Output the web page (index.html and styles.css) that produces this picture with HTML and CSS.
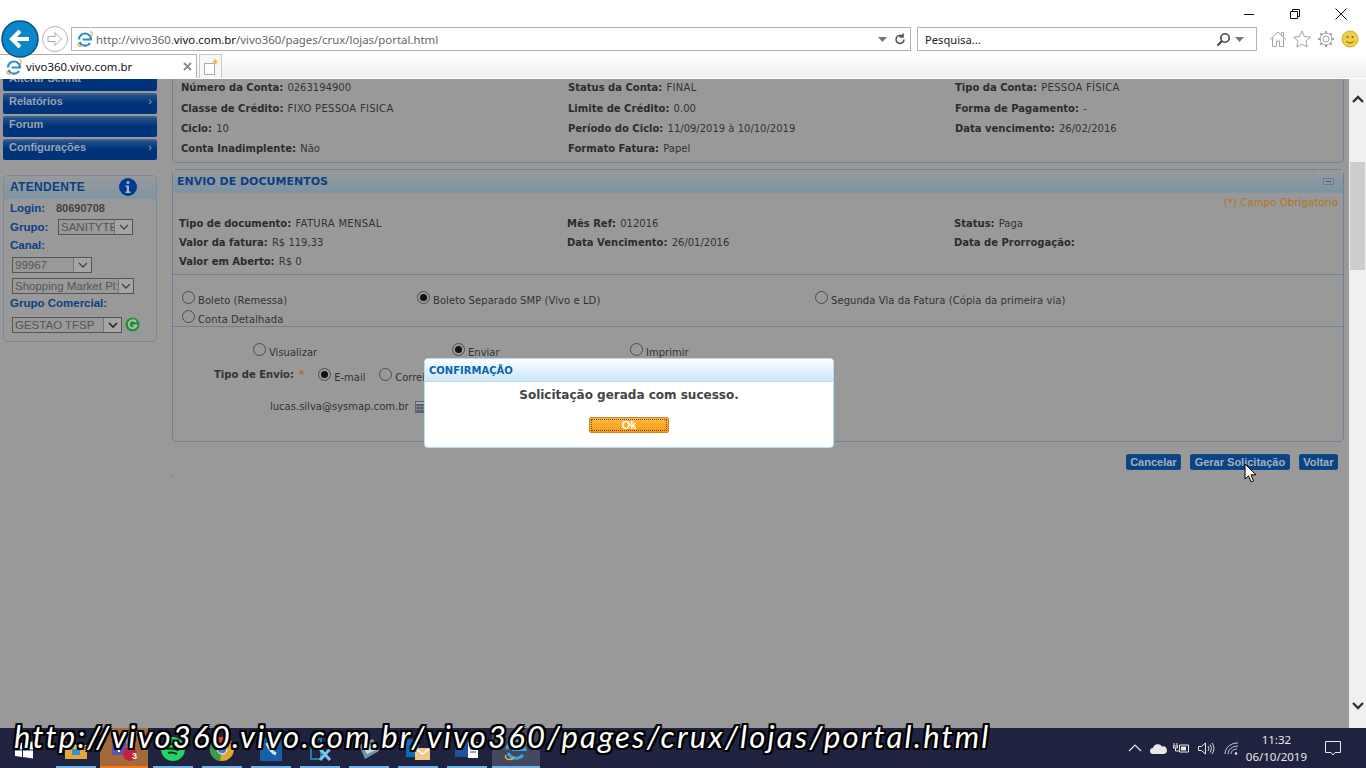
FILE: index.html
```html
<!DOCTYPE html>
<html lang="pt-BR">
<head>
<meta charset="utf-8">
<title>vivo360.vivo.com.br</title>
<link rel="stylesheet" href="styles.css">
</head>
<body>
<div class="screen">
  <header class="chrome">
    <div class="winbar">
      <svg class="winctl" width="12" height="12" viewBox="0 0 12 12"><path d="M1 6.500h10" stroke="#111" fill="none"/></svg>
      <svg class="winctl" width="12" height="12" viewBox="0 0 12 12"><path d="M1.500 3.500h7v7h-7zM3.500 3.500v-2h7v7h-2" stroke="#111" fill="none"/></svg>
      <svg class="winctl" width="12" height="12" viewBox="0 0 12 12"><path d="M.5.500l11 11M11.500.500l-11 11" stroke="#111" fill="none"/></svg>
    </div>
    <div class="navbar">
      <svg class="backbtn" width="40" height="40" viewBox="0 0 40 40"><circle cx="20" cy="20" r="18" fill="#0b86c9" stroke="#0d4f86" stroke-width="1.500"/><path d="M29 20H13M20 12l-8 8 8 8" stroke="#fff" stroke-width="4" fill="none"/></svg>
      <svg class="fwdbtn" width="28" height="28" viewBox="0 0 28 28"><circle cx="14" cy="14" r="12.500" fill="#fff" stroke="#b5b5b5"/><path d="M7 11.500h7v-4l6.500 6.500-6.500 6.500v-4H7z" fill="#fff" stroke="#aaa"/></svg>
      <div class="addr">
        <svg width="18" height="18" viewBox="0 0 18 18"><path d="M3 9.500a6 6 0 0 1 12 0H6.500M3.500 12a6 6 0 0 0 10.500 1" fill="none" stroke="#2a8fd0" stroke-width="2.200"/><path d="M14 2c2.500-1 3 2 1 4M2 13c-1 3 2 4 5 2" fill="none" stroke="#e8b33a" stroke-width="1.200"/></svg>
        <span class="url">http://vivo360.<b>vivo.com.br</b>/vivo360/pages/crux/lojas/portal.html</span>
        <span class="addr-end">
          <svg width="9" height="5" viewBox="0 0 9 5"><path d="M0 0h9L4.500 5z" fill="#777"/></svg>
          <svg width="12" height="13" viewBox="0 0 12 13"><path d="M10 6.500a4 4 0 1 1-1.500-3.200M9 .500v3.500H5.500" fill="none" stroke="#555" stroke-width="1.600"/></svg>
        </span>
      </div>
      <div class="search">
        <span class="search-text">Pesquisa...</span>
        <svg width="15" height="15" viewBox="0 0 15 15"><circle cx="9" cy="6" r="4.200" fill="none" stroke="#444" stroke-width="1.600"/><path d="M6 9l-4.500 4.500" stroke="#444" stroke-width="2.200"/></svg>
        <svg width="9" height="5" viewBox="0 0 9 5"><path d="M0 0h9L4.500 5z" fill="#777"/></svg>
      </div>
      <div class="tools">
        <svg width="18" height="18" viewBox="0 0 18 18"><path d="M1 9.500L9 2l8 7.500M3.500 8v8.500h4V11h3v5.500h4V8M12.500 5V2.500h2V7" fill="none" stroke="#a3a3a3"/></svg>
        <svg width="18" height="18" viewBox="0 0 18 18"><path d="M9 1l2.400 5.500 6 .6-4.500 4 1.300 5.900L9 14l-5.200 3 1.300-5.900-4.500-4 6-.6z" fill="none" stroke="#a3a3a3"/></svg>
        <svg width="18" height="18" viewBox="0 0 18 18"><circle cx="9" cy="9" r="3" fill="none" stroke="#a3a3a3"/><circle cx="9" cy="9" r="6" fill="none" stroke="#a3a3a3"/><path d="M9 1v2.500M9 14.500V17M1 9h2.500M14.500 9H17M3.300 3.300l1.800 1.800M12.900 12.900l1.800 1.800M3.300 14.700l1.800-1.800M12.900 5.100l1.800-1.800" stroke="#a3a3a3" stroke-width="2"/></svg>
        <svg width="18" height="18" viewBox="0 0 18 18"><circle cx="9" cy="9" r="8" fill="#f1cf45" stroke="#d5a92c"/><circle cx="6.500" cy="7" r="1" fill="#7a6420"/><circle cx="11.500" cy="7" r="1" fill="#7a6420"/><path d="M5 11c2 2.500 6 2.500 8 0" fill="none" stroke="#7a6420"/></svg>
      </div>
    </div>
    <div class="tabbar">
      <div class="tab">
        <svg width="18" height="18" viewBox="0 0 18 18"><path d="M3 9.500a6 6 0 0 1 12 0H6.500M3.500 12a6 6 0 0 0 10.500 1" fill="none" stroke="#2a8fd0" stroke-width="2.200"/><path d="M14 2c2.500-1 3 2 1 4M2 13c-1 3 2 4 5 2" fill="none" stroke="#e8b33a" stroke-width="1.200"/></svg>
        <span class="tab-title">vivo360.vivo.com.br</span>
        <svg width="9" height="9" viewBox="0 0 9 9"><path d="M1 1l7 7M8 1L1 8" stroke="#8a8a8a" stroke-width="1.800"/></svg>
      </div>
      <div class="newtab">
        <svg width="16" height="18" viewBox="0 0 16 18"><path d="M1.500 5.500h10v11h-10z" fill="#fff" stroke="#aaa"/><path d="M12 0l.8 2.500L15.500 3l-2.200 1.300.5 2.500-1.800-1.600L10 6.500l.7-2.500L9 3l2.400-.5z" fill="#f2b632"/></svg>
      </div>
    </div>
  </header>

  <div class="viewport">
    <div class="page">
      <aside class="sidebar">
        <nav class="menu">
          <div class="menu-item">Alterar Senha</div>
          <div class="menu-item">Relatórios<span class="caret">›</span></div>
          <div class="menu-item">Forum</div>
          <div class="menu-item">Configurações<span class="caret">›</span></div>
        </nav>
        <section class="agent">
          <div class="agent-head">ATENDENTE
            <svg class="info" width="18" height="18" viewBox="0 0 18 18"><circle cx="9" cy="9" r="9" fill="#003b8f"/><circle cx="9" cy="4.500" r="1.500" fill="#a7b3c4"/><path d="M6.500 7.500h3.500v6h1.500v1.500h-5v-1.500h1.200v-4.500H6.500z" fill="#a7b3c4"/></svg>
          </div>
          <div class="agent-body">
            <div class="agent-row"><span class="agent-label login-label">Login:</span><span class="agent-val">80690708</span></div>
            <div class="agent-row"><span class="agent-label grupo-label">Grupo:</span><span class="sel sel-grupo"><span class="sel-text">SANITYTE</span><span class="sel-arrow"><svg width="10" height="6" viewBox="0 0 10 6"><path d="M1 1l4 4 4-4" fill="none" stroke="#444" stroke-width="1.300"/></svg></span></span></div>
            <div class="agent-row"><span class="agent-label">Canal:</span></div>
            <div class="agent-row indent"><span class="sel sel-canal"><span class="sel-text">99967</span><span class="sel-arrow"><svg width="10" height="6" viewBox="0 0 10 6"><path d="M1 1l4 4 4-4" fill="none" stroke="#444" stroke-width="1.300"/></svg></span></span></div>
            <div class="agent-row indent"><span class="sel sel-shop"><span class="sel-text">Shopping Market Pl:</span><span class="sel-arrow"><svg width="10" height="6" viewBox="0 0 10 6"><path d="M1 1l4 4 4-4" fill="none" stroke="#444" stroke-width="1.300"/></svg></span></span></div>
            <div class="agent-row"><span class="agent-label">Grupo Comercial:</span></div>
            <div class="agent-row indent"><span class="sel sel-gestao"><span class="sel-text">GESTAO TFSP</span><span class="sel-arrow"><svg width="10" height="6" viewBox="0 0 10 6"><path d="M1 1l4 4 4-4" fill="none" stroke="#222" stroke-width="1.600"/></svg></span></span>
              <svg class="refresh" width="15" height="15" viewBox="0 0 15 15"><circle cx="7.500" cy="7.500" r="7" fill="#2b8a3e"/><path d="M11 5a4 4 0 1 0 .5 3.500H8" fill="none" stroke="#9fc9a8" stroke-width="1.800"/></svg>
            </div>
          </div>
        </section>
      </aside>

      <main class="content">
        <section class="panel panel-top">
          <div class="info-grid top-grid">
            <div><b>Número da Conta:</b> 0263194900</div><div><b>Status da Conta:</b> <span class="cap">FINAL</span></div><div><b>Tipo da Conta:</b> <span class="cap">PESSOA FÍSICA</span></div>
            <div><b>Classe de Crédito:</b> <span class="cap">FIXO PESSOA FISICA</span></div><div><b>Limite de Crédito:</b> 0.00</div><div><b>Forma de Pagamento:</b> -</div>
            <div><b>Ciclo:</b> 10</div><div><b>Período do Ciclo:</b> 11/09/2019 à 10/10/2019</div><div><b>Data vencimento:</b> 26/02/2016</div>
            <div><b>Conta Inadimplente:</b> Não</div><div><b>Formato Fatura:</b> Papel</div><div></div>
          </div>
        </section>

        <section class="panel panel-docs">
          <div class="panel-head"><span class="panel-title">ENVIO DE DOCUMENTOS</span><span class="collapse"><span class="collapse-box"></span></span></div>
          <div class="required">(*) Campo Obrigatório</div>
          <div class="info-grid doc-grid">
            <div><b>Tipo de documento:</b> <span class="cap">FATURA MENSAL</span></div><div><b>Mês Ref:</b> 012016</div><div><b>Status:</b> Paga</div>
            <div><b>Valor da fatura:</b> R$ 119,33</div><div><b>Data Vencimento:</b> 26/01/2016</div><div><b>Data de Prorrogação:</b></div>
            <div><b>Valor em Aberto:</b> R$ 0</div><div></div><div></div>
          </div>
          <div class="options">
            <div class="opt-row">
              <label class="opt opt-a"><span class="radio"></span>Boleto (Remessa)</label>
              <label class="opt opt-b"><span class="radio on"></span>Boleto Separado SMP (Vivo e LD)</label>
              <label class="opt"><span class="radio"></span>Segunda Via da Fatura (Cópia da primeira via)</label>
            </div>
            <div class="opt-row"><label class="opt"><span class="radio"></span>Conta Detalhada</label></div>
          </div>
          <div class="actions">
            <div class="opt-row action-row">
              <label class="opt opt-v"><span class="radio"></span>Visualizar</label>
              <label class="opt opt-e"><span class="radio on"></span>Enviar</label>
              <label class="opt"><span class="radio"></span>Imprimir</label>
            </div>
            <div class="send-row">
              <b class="send-label">Tipo de Envio:</b><span class="star">*</span>
              <label class="opt opt-m"><span class="radio on"></span>E-mail</label>
              <label class="opt"><span class="radio"></span>Correio</label>
            </div>
            <div class="mail-row">lucas.silva@sysmap.com.br
              <svg width="10" height="12" viewBox="0 0 10 12"><path d="M0 0h10v12H0z" fill="#5b6470"/><path d="M1 1h8v2H1z" fill="#9aa"/><path d="M1.500 5h1v1h-1zM4.500 5h1v1h-1zM7.500 5h1v1h-1zM1.500 8h1v1h-1zM4.500 8h1v1h-1zM7.500 8h1v1h-1z" fill="#ccc"/></svg>
            </div>
          </div>
        </section>

        <div class="buttons">
          <button class="btn">Cancelar</button>
          <button class="btn">Gerar Solicitação</button>
          <button class="btn">Voltar</button>
        </div>
        <div class="dot">.</div>
      </main>
    </div>
    <div class="scrollbar">
      <svg width="12" height="8" viewBox="0 0 12 8"><path d="M1 7l5-5 5 5" fill="none" stroke="#333" stroke-width="2.400"/></svg>
      <div class="thumb"></div>
      <svg class="scroll-down" width="12" height="8" viewBox="0 0 12 8"><path d="M1 1l5 5 5-5" fill="none" stroke="#333" stroke-width="2.400"/></svg>
    </div>
  </div>

  <footer class="taskbar">
    <svg class="tb-win" width="18" height="18" viewBox="0 0 18 18"><path d="M0 3l7-1v6.500H0zM8 2l10-1.500v8H8zM0 9.500h7V16l-7-1zM8 9.500h10v8L8 16z" fill="#fff"/></svg>
    <div class="tb-app"><svg width="26" height="24" viewBox="0 0 26 24"><path d="M2 5h9l2 3h11v14H2z" fill="#f1c24b"/><path d="M2 12h22v10H2z" fill="#e2a93a"/><path d="M9 12h8v6H9z" fill="#3a8fd6"/></svg></div>
    <div class="tb-app tb-teams"><svg width="30" height="28" viewBox="0 0 30 28"><path d="M3 6h14v14H3z" fill="#5558af"/><path d="M6 9h8v2h-3v6H9v-6H6z" fill="#fff"/><circle cx="20" cy="6" r="3" fill="#7b83eb"/><circle cx="21" cy="19" r="7" fill="#c4213f"/></svg><span class="badge">3</span></div>
    <div class="tb-app"><svg width="26" height="26" viewBox="0 0 26 26"><circle cx="13" cy="13" r="12" fill="#1ed760"/><path d="M6 9c5-1.500 10-1 14 1.500M7 13c4-1 8-.5 11.500 1.500M8 17c3-.8 6-.4 9 1" fill="none" stroke="#17301f" stroke-width="2"/></svg></div>
    <div class="tb-app"><svg width="26" height="26" viewBox="0 0 26 26"><circle cx="13" cy="13" r="12" fill="#e0a92c"/><path d="M13 13L2.500 7A12 12 0 0 1 24 8H13z" fill="#d6453a"/><path d="M13 13L2.500 7A12 12 0 0 0 11 25z" fill="#3c9a4a"/><circle cx="13" cy="13" r="5" fill="#3d7fd8" stroke="#fff"/></svg></div>
    <div class="tb-app"><svg width="24" height="24" viewBox="0 0 24 24"><path d="M1 1h22v24H1z" fill="#1560a8"/><path d="M8 6c2 6 4 9 9 11" fill="none" stroke="#cfe4f5" stroke-width="3"/></svg></div>
    <div class="tb-app"><svg width="26" height="26" viewBox="0 0 26 26"><path d="M4 3h10v20H4z" fill="none" stroke="#1e7ea8" stroke-width="2"/><path d="M13 13l10 11M23 13L13 24" stroke="#7cc7e8" stroke-width="3"/></svg></div>
    <div class="tb-app"><svg width="24" height="24" viewBox="0 0 24 24"><path d="M2 8l14-6 6 12-14 8z" fill="#6f96a5"/><path d="M6 10l10-4 3 7-9 4z" fill="#c6dbe4"/></svg></div>
    <div class="tb-app"><svg width="26" height="26" viewBox="0 0 26 26"><path d="M1 3h13v18H1z" fill="#0f6cbd"/><path d="M10 12h15v12H10z" fill="#f2c58a"/><path d="M10 12l7.500 6 7.500-6" fill="none" stroke="#fff" stroke-width="1.500"/></svg></div>
    <div class="tb-app"><svg width="26" height="26" viewBox="0 0 26 26"><path d="M1 3h14v18H1z" fill="#1f4f9d"/><path d="M14 6h10v16H14z" fill="#fff"/><path d="M16 10h6M16 13h6M16 16h6" stroke="#1f4f9d"/></svg></div>
    <div class="tb-app tb-ie"><svg width="26" height="26" viewBox="0 0 26 26"><path d="M4 13.500a9 9 0 0 1 18 0H9M5 17a9 9 0 0 0 15 2" fill="none" stroke="#2fa6df" stroke-width="3"/><path d="M20 3c4-1.500 5 3 2 6M3 19c-2 4 3 6 8 3" fill="none" stroke="#e8b33a" stroke-width="1.500"/></svg></div>
    <div class="tray">
      <svg width="14" height="8" viewBox="0 0 14 8"><path d="M1 7l6-6 6 6" fill="none" stroke="#e8e8e8" stroke-width="1.200"/></svg>
      <svg class="t-cloud" width="17" height="11" viewBox="0 0 17 11"><path d="M3 11a3 3 0 0 1 0-6 5 5 0 0 1 9-1.500A3.800 3.800 0 0 1 14 11z" fill="#e8e8e8"/></svg>
      <svg class="t-batt" width="16" height="12" viewBox="0 0 16 12"><path d="M6.500 3h9v7h-9zM1 1v3M4 1v3M.5 4h4v2h-4zM2.500 6v3h4" fill="none" stroke="#e8e8e8"/><path d="M8 4.500h5v4H8z" fill="#e8e8e8"/></svg>
      <svg class="t-vol" width="17" height="13" viewBox="0 0 17 13"><path d="M.5 4.500h3L7.500 1v11l-4-3.500h-3zM10 4c1 1.500 1 3.500 0 5M12 2.500c1.800 2.500 1.800 5.500 0 8M14 1c2.500 3.500 2.500 7.500 0 11" fill="none" stroke="#e8e8e8"/></svg>
      <svg class="t-wifi" width="15" height="13" viewBox="0 0 15 13"><path d="M1 12c0-6 5-11 13-11M4 12c0-4 4-8 10-8M7 12c0-2.500 2-5 6-5" fill="none" stroke="#cfcfcf"/><circle cx="12" cy="11.500" r="1.300" fill="#e8e8e8"/></svg>
      <div class="clock"><span>11:32</span><span>06/10/2019</span></div>
      <svg class="t-note" width="16" height="15" viewBox="0 0 16 15"><path d="M.5.500h15v11H10L8 14l-2-2.500H.5z" fill="none" stroke="#e8e8e8"/></svg>
    </div>
  </footer>

  <div class="modal">
    <div class="modal-head">CONFIRMAÇÃO</div>
    <div class="modal-msg">Solicitação gerada com sucesso.</div>
    <button class="modal-ok"><span class="modal-ok-in">Ok</span></button>
  </div>

  <svg class="cursor" width="13" height="20" viewBox="0 0 13 20"><path d="M1 1v15l3.500-3.200 2.500 6 2.500-1-2.500-6H12z" fill="#fff" stroke="#000"/></svg>

  <div class="caption">http://vivo360.vivo.com.br/vivo360/pages/crux/lojas/portal.html</div>
</div>
</body>
</html>
```
FILE: styles.css
```css
* { box-sizing: border-box; }
html, body { margin: 0; padding: 0; height: 100%; overflow: hidden; }
body { font-family: "DejaVu Sans", sans-serif; font-size: 10px; color: #333; }
.screen { position: relative; width: 1366px; height: 768px; display: flex; flex-direction: column; overflow: hidden; background: #999; }

/* Browser chrome */
.chrome { height: 78px; flex: none; background: linear-gradient(#fff 0, #fff 56px, #eeeeee 78px); font-family: "Noto Sans", sans-serif; position: relative; z-index: 2; }
.winbar { height: 27px; display: flex; justify-content: flex-end; align-items: center; padding: 1px 19px 0 0; gap: 34px; }
.navbar { height: 27px; display: flex; align-items: flex-start; position: relative; padding-left: 71px; }
.backbtn { position: absolute; left: 0; top: -8px; z-index: 3; }
.fwdbtn { position: absolute; left: 41px; top: -2px; }
.addr { width: 840px; height: 24px; border: 1px solid #b4b4b4; background: #fff; display: flex; align-items: center; padding: 0 4px 0 4px; }
.url { font-size: 11.400px; color: #666; margin-left: 2px; flex: 1; }
.url b { font-weight: 400; color: #111; }
.addr-end { display: flex; align-items: center; gap: 7px; }
.search { width: 340px; height: 24px; border: 1px solid #b4b4b4; background: #fff; margin-left: 6px; display: flex; align-items: center; padding: 0 12px 0 7px; gap: 4px; }
.search-text { flex: 1; font-size: 11.200px; color: #222; }
.tools { display: flex; align-items: center; gap: 6px; margin-left: 12px; height: 24px; }
.tabbar { height: 24px; display: flex; align-items: flex-end; }
.tab { width: 197px; height: 24px; background: #fff; border-top: 1px solid #b0b0b0; border-right: 1px solid #b0b0b0; display: flex; align-items: center; padding: 0 4px 0 5px; }
.tab-title { flex: 1; font-size: 11.400px; color: #111; margin-left: 3px; }
.newtab { width: 23px; height: 24px; margin-left: 2px; border: 1px solid #c8c8c8; border-bottom: 0; background: #f7f7f7; display: flex; align-items: center; justify-content: center; }

/* Page viewport */
.viewport { flex: 1; min-height: 0; display: flex; border-top: 1px solid #fff; }
.page { flex: 1; min-width: 0; display: flex; background: #999; overflow: hidden; padding-left: 3px; }
.scrollbar { width: 17px; background: #f0f0f0; display: flex; flex-direction: column; align-items: center; padding-top: 16px; position: relative; }
.thumb { width: 15px; height: 108px; background: #cdcdcd; margin-top: 59px; }
.scroll-down { margin-top: auto; margin-bottom: 18px; }

/* Sidebar */
.sidebar { width: 154px; flex: none; font-family: "Liberation Sans", sans-serif; }
.menu { margin-top: -9px; display: flex; flex-direction: column; gap: 2px; margin-bottom: 15px; }
.menu-item { height: 21px; background: linear-gradient(#4a6a94 0, #1c4a85 3px, #0b3f80 8px, #00347a 9px, #00347a 100%); border-radius: 2px; color: #98a2b0; font-weight: 700; font-size: 11px; padding: 1px 0 0 6px; line-height: 14px; display: flex; justify-content: space-between; }
.caret { margin-right: 5px; font-weight: 400; }
.agent { height: 167px; border: 1px solid #7688a0; border-radius: 5px; overflow: hidden; }
.agent-head { height: 23px; background: linear-gradient(#979a9c, #7f95a3); border-bottom: 1px solid #8096a8; color: #0b4085; font-weight: 700; font-size: 12px; padding-left: 6px; display: flex; align-items: center; position: relative; letter-spacing: .3px; }
.info { position: absolute; left: 115px; top: 2px; }
.agent-body { padding: 0 0 0 6px; display: flex; flex-direction: column; }
.agent-row { display: flex; align-items: center; flex: none; height: 18px; }
.agent-row:nth-child(2) { height: 20px; }
.agent-row:nth-child(3) { height: 16px; }
.agent-row:nth-child(4) { height: 23px; }
.agent-row:nth-child(5) { height: 19px; }
.agent-row:nth-child(6) { height: 16px; }
.agent-row:nth-child(7) { height: 27px; }
.agent-label { color: #0b4085; font-weight: 700; font-size: 11.500px; }
.agent-val { color: #444; font-weight: 700; font-size: 11px; }
.login-label { width: 46px; }
.grupo-label { width: 48px; }
.indent { padding-left: 2px; }
.sel { display: inline-flex; height: 16px; border: 1px solid #555; color: #555; font-size: 11.500px; line-height: 14px; align-items: stretch; overflow: hidden; }
.sel-text { flex: 1; padding-left: 2px; overflow: hidden; white-space: nowrap; }
.sel-arrow { width: 18px; flex: none; border-left: 1px solid #777; background: #a5a5a5; display: flex; align-items: center; justify-content: center; }
.sel-grupo { width: 75px; }
.sel-canal { width: 80px; }
.sel-shop { width: 122px; }
.sel-shop .sel-arrow { width: 15px; }
.sel-gestao { width: 110px; }
.refresh { margin-left: 3px; }

/* Main */
.content { flex: 1; min-width: 0; margin-left: 15px; margin-right: 5px; display: flex; flex-direction: column; }
.panel { border: 1px solid #6f8299; border-radius: 5px; }
.panel-top { border-top: 0; border-radius: 0 0 5px 5px; height: 84px; padding: 0 0 0 8px; }
.info-grid { display: grid; grid-template-columns: 387px 387px 1fr; white-space: nowrap; }
.info-grid b { color: #2c2c2c; margin-right: 1px; }
.cap { letter-spacing: .3px; }
.top-grid { grid-template-rows: 21px 20px 20px 20px; padding-top: 1px; line-height: 16px; }
.panel-docs { margin-top: 6px; height: 273px; border-radius: 5px; }
.panel-head { height: 23px; background: linear-gradient(#979a9c, #7e94a2); border-bottom: 1px solid #8096a8; display: flex; align-items: center; justify-content: space-between; }
.panel-title { color: #0b4085; font-weight: 700; font-size: 11px; padding-left: 4px; }
.collapse { width: 30px; height: 22px; border-left: 1px solid #8096a8; display: flex; align-items: center; justify-content: center; }
.collapse-box { width: 11px; height: 7px; border: 1px solid #5a80a8; display: flex; align-items: center; justify-content: center; }
.collapse-box::after { content: ""; width: 5px; height: 1px; background: #2d5c90; }
.required { text-align: right; color: #b3741c; padding-right: 5px; line-height: 12px; margin-top: 4px; letter-spacing: .15px; }
.doc-grid { padding: 7px 0 0 6px; grid-auto-rows: 19px; line-height: 15px; grid-template-columns: 388px 387px 1fr; }
.options { border-top: 1px solid #6f8299; border-bottom: 1px solid #6f8299; margin-top: 1px; height: 53px; padding: 14px 0 0 9px; letter-spacing: .07px; }
.opt-row { display: flex; height: 19px; }
.opt { display: inline-flex; align-items: flex-end; line-height: 12px; color: #333; white-space: nowrap; padding-bottom: 1px; }
.opt-a { width: 235px; }
.opt-b { width: 398px; }
.radio { width: 13px; height: 13px; border: 1px solid #4d4d4d; border-radius: 50%; margin-right: 3px; position: relative; top: -3px; flex: none; display: block; }
.radio.on::after { content: ""; position: absolute; left: 2px; top: 2px; width: 7px; height: 7px; border-radius: 50%; background: #111; }
.actions { padding: 13px 0 0 80px; }
.action-row { height: 20px; }
.opt-v { width: 199px; }
.opt-e { width: 178px; }
.send-row { display: flex; align-items: flex-end; height: 25px; margin-left: -39px; }
.send-label { line-height: 12px; position: relative; top: -4px; }
.star { color: #a8732a; font-weight: 700; margin: 0 14px 0 5px; line-height: 12px; position: relative; top: -4px; }
.opt-m { width: 61px; }
.mail-row { margin: 15px 0 0 17px; display: flex; align-items: center; gap: 6px; line-height: 14px; }
.buttons { display: flex; justify-content: flex-end; gap: 9px; padding-right: 6px; margin-top: 12px; }
.btn { height: 16px; padding: 0 3.500px; border: 1px solid #134a86; border-radius: 2px; background: #0b4485; color: #a3b0c0; font: 700 11px/14px "Liberation Sans", sans-serif; }
.dot { line-height: 8px; margin-top: 1px; margin-left: -1px; color: #555; font-size: 8px; }

/* Taskbar */
.taskbar { height: 40px; flex: none; background: #1f2340; display: flex; align-items: stretch; padding-left: 5px; color: #e8e8e8; position: relative; }
.tb-win { margin: 13px 18px 0 10px; }
.tb-app { width: 40px; margin: 0 4.500px; border-bottom: 2px solid #72b1e6; display: flex; align-items: center; justify-content: center; padding-top: 3px; position: relative; }
.tb-teams { width: 48px; margin: 0; background: #a3693a; border-bottom-color: #f47b16; }
.tb-ie { width: 48px; margin: 0 0 0 1px; background: #44485f; }
.badge { position: absolute; right: 11px; bottom: 5px; font: 700 9px "Liberation Sans", sans-serif; color: #fff; }
.tray { margin-left: auto; display: flex; align-items: center; padding-right: 25px; }
.t-cloud { margin-left: 8px; }
.t-batt { margin-left: 6px; }
.t-vol { margin-left: 9px; }
.t-wifi { margin-left: 9px; }
.clock { display: flex; flex-direction: column; align-items: center; font: 11.500px/17px "Noto Sans", sans-serif; margin-left: 7px; }
.t-note { margin-left: 18px; }

/* Modal */
.modal { position: absolute; left: 424px; top: 358px; width: 410px; height: 90px; background: #fff; border: 1px solid #b9dcf0; border-radius: 4px; z-index: 5; display: flex; flex-direction: column; align-items: center; }
.modal-head { width: 100%; height: 23px; background: linear-gradient(#fbfdfe, #cde7f7); border-bottom: 1px solid #b9dcf0; color: #0a62b5; font-weight: 700; font-size: 10px; line-height: 24px; padding-left: 4px; border-radius: 3px 3px 0 0; }
.modal-msg { font-weight: 700; font-size: 12px; color: #444; line-height: 16px; margin-top: 5px; }
.modal-ok { width: 80px; height: 16px; margin-top: 14px; padding: 1px; border: 1px solid #c98a26; border-radius: 2px; background: linear-gradient(#ffb848, #f79a12); color: #fff; font: 700 11px/11px "Liberation Sans", sans-serif; }
.modal-ok-in { display: block; height: 12px; border: 1px dotted #6b4a12; }

.cursor { position: absolute; left: 1244px; top: 463px; z-index: 6; }
.caption { position: absolute; left: 14px; top: 716px; z-index: 7; font: italic 400 31px/40px "Lato", sans-serif; color: #fff; white-space: nowrap; letter-spacing: 2.200px; text-shadow: -2px 0 0 #000, 2px 0 0 #000, 0 -2px 0 #000, 0 2px 0 #000, -2px -2px 0 #000, 2px 2px 0 #000, -2px 2px 0 #000, 2px -2px 0 #000; }
```
